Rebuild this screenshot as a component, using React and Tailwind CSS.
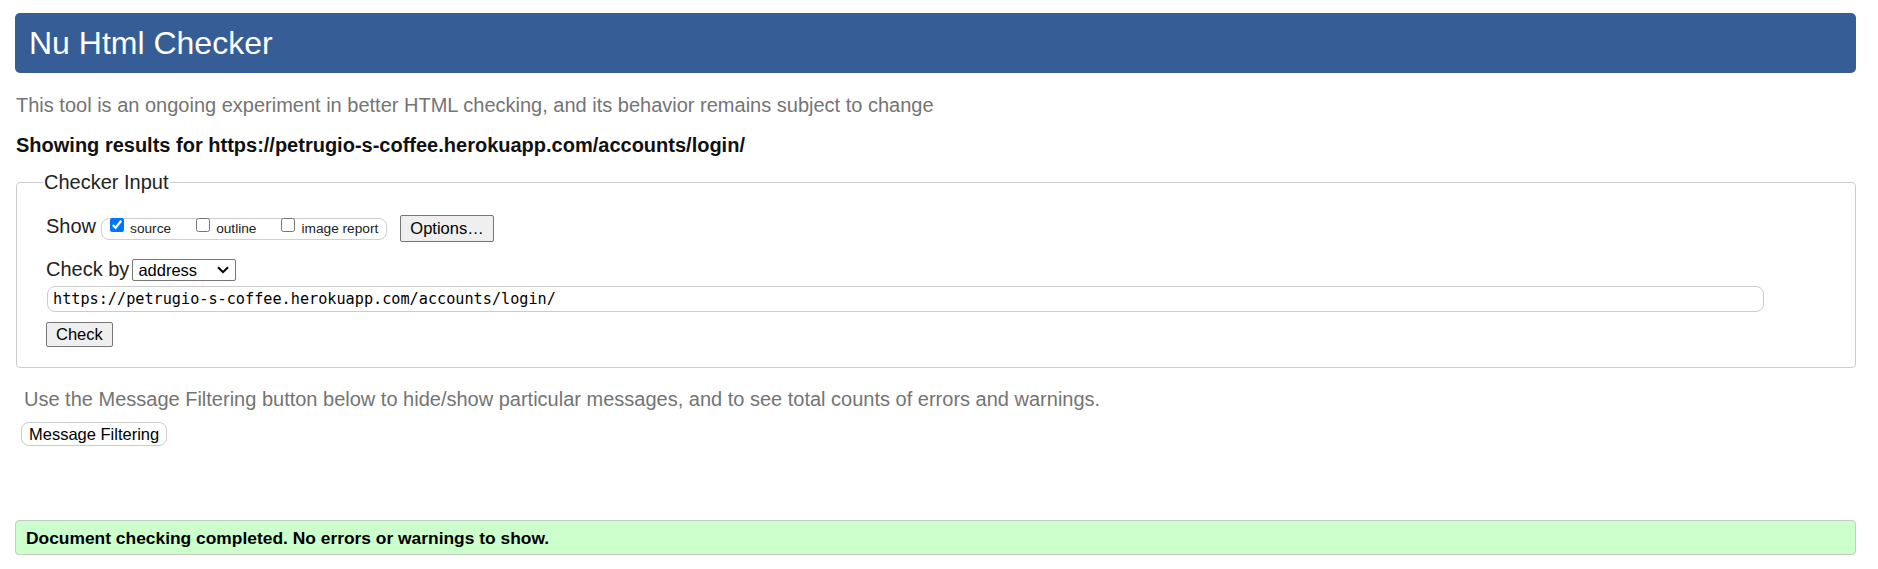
export default function App() {
  const url = "https://petrugio-s-coffee.herokuapp.com/accounts/login/";
  return (
    <div className="min-h-[569px] bg-white pl-[15px] pr-[22px] pt-[13px] font-['Liberation_Sans',Arial,sans-serif] text-[#222]">
      <header className="h-[60px] rounded-[5px] bg-[#365d95] pl-[14px] pt-[14px]">
        <h1 className="text-[32px] font-normal leading-[32px] text-white">Nu Html Checker</h1>
      </header>

      <p className="ml-px mt-[20px] text-[20px] leading-[24px] text-[#747474]">
        This tool is an ongoing experiment in better HTML checking, and its behavior remains subject to change
      </p>
      <p className="ml-px mt-[16px] text-[20px] font-bold leading-[24px] text-[#111]">
        Showing results for {url}
      </p>

      <fieldset className="ml-px mt-[13px] rounded-[4px] border border-[#cccccc] pb-[20px] pl-[29px] pt-[21px]">
        <legend className="-ml-[3px] px-px text-[20px] leading-[24px] text-[#222]">Checker Input</legend>

        <div className="flex h-[27px] items-start">
          <span className="-mt-px text-[20px] leading-[24px]">Show</span>
          <div className="ml-[5px] mt-[3px] flex h-[22px] items-start gap-[25px] rounded-[8px] border border-[#cfcfcf] pl-[8px] pr-[8px]">
            <label className="flex items-start gap-[6px]">
              <input type="checkbox" defaultChecked className="-mt-px h-[14px] w-[14px] accent-[#0075ff]" />
              <span className="mt-[1.5px] text-[13.7px] leading-[16px]">source</span>
            </label>
            <label className="flex items-start gap-[6px]">
              <input type="checkbox" className="-mt-px h-[14px] w-[14px] accent-[#0075ff]" />
              <span className="mt-[1.5px] text-[13.7px] leading-[16px]">outline</span>
            </label>
            <label className="flex items-start gap-[6px]">
              <input type="checkbox" className="-mt-px h-[14px] w-[14px] accent-[#0075ff]" />
              <span className="mt-[1.5px] text-[13.7px] leading-[16px]">image report</span>
            </label>
          </div>
          <button
            type="button"
            className="ml-[13px] flex h-[27px] items-center rounded-[2px] border border-[#767676] bg-[#efefef] px-[9px] text-[16.5px] leading-[19px] text-black"
          >
            Options…
          </button>
        </div>

        <div className="mt-[15px] flex items-start">
          <span className="text-[20px] leading-[24px]">Check by</span>
          <div className="ml-[3px] mt-[2px] flex h-[22px] w-[104px] items-center justify-between rounded-[2px] border border-[#767676] pl-[5px] pr-[5px] text-black">
            <span className="text-[16.5px] leading-[19px]">address</span>
            <svg width="12" height="8" viewBox="0 0 12 8" className="mr-px">
              <path d="M1 1.2 L6 6.2 L11 1.2" stroke="#000" strokeWidth="2" fill="none" />
            </svg>
          </div>
        </div>

        <div className="ml-px mt-[5px] flex h-[26px] w-[1717px] items-center rounded-[8px] border border-[#cccccc] pl-[5px] font-['DejaVu_Sans_Mono',monospace] text-[15.2px] leading-[18px] text-black">
          {url}
        </div>

        <button
          type="button"
          className="mt-[10px] flex h-[25px] items-center rounded-[2px] border border-[#767676] bg-[#efefef] px-[9px] text-[16.5px] leading-[19px] text-black"
        >
          Check
        </button>
      </fieldset>

      <p className="ml-[9px] mt-[19px] text-[20px] leading-[24px] text-[#747474]">
        Use the Message Filtering button below to hide/show particular messages, and to see total counts of errors and warnings.
      </p>
      <button
        type="button"
        className="ml-[6px] mt-[11px] flex h-[24px] items-center rounded-[8px] border border-[#cccccc] bg-white px-[7px] text-[16.5px] leading-[19px] text-black"
      >
        Message Filtering
      </button>

      <div className="mt-[74px] flex h-[35px] items-center rounded-[4px] border border-[#c8c8c8] bg-[#ccffcc] pl-[10px] text-[17.4px] font-bold leading-[20px] text-black">
        Document checking completed. No errors or warnings to show.
      </div>
    </div>
  );
}
